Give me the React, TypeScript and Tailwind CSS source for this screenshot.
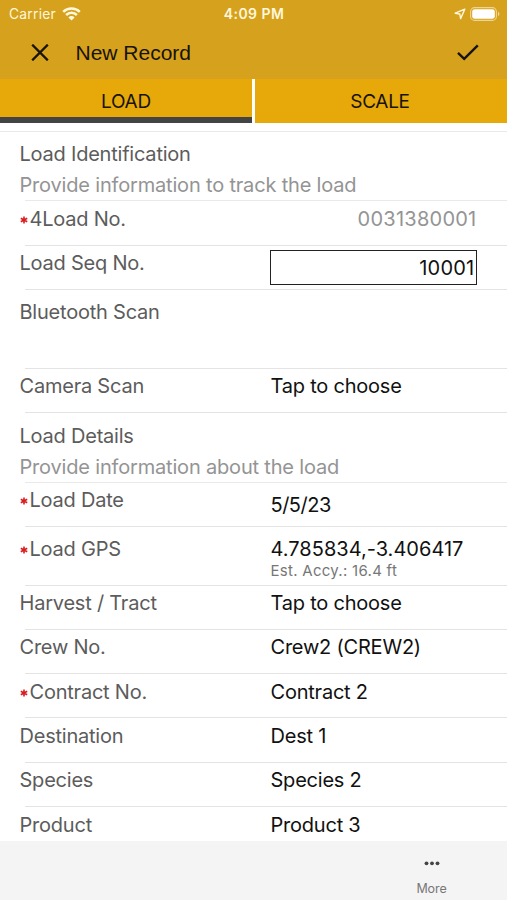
import React from 'react';
import { clsx } from 'clsx';

type Field = {
  label: string;
  value?: string;
  note?: string;
  required?: boolean;
  kind?: 'readonly' | 'input';
  height: string;
  labelPad?: string;
  valuePad?: string;
  valueTracking?: string;
};

const identificationFields: Field[] = [
  { label: '4Load No.', value: '0031380001', required: true, kind: 'readonly', height: 'h-[45px]', labelPad: 'pt-1' },
  { label: 'Load Seq No.', value: '10001', kind: 'input', height: 'h-11' },
  { label: 'Bluetooth Scan', height: 'h-[79px]', labelPad: 'pt-2' },
  { label: 'Camera Scan', value: 'Tap to choose', height: 'h-11' },
];

const detailFields: Field[] = [
  { label: 'Load Date', value: '5/5/23', required: true, height: 'h-11', valuePad: 'pt-2', valueTracking: 'tracking-[-0.5px]' },
  { label: 'Load GPS', value: '4.785834,-3.406417', note: 'Est. Accy.: 16.4 ft', required: true, height: 'h-[59px]', labelPad: 'pt-2', valuePad: 'pt-2', valueTracking: 'tracking-[0.02px]' },
  { label: 'Harvest / Tract', value: 'Tap to choose', height: 'h-11' },
  { label: 'Crew No.', value: 'Crew2 (CREW2)', height: 'h-11' },
  { label: 'Contract No.', value: 'Contract 2', required: true, height: 'h-11', labelPad: 'pt-1', valuePad: 'pt-1' },
  { label: 'Destination', value: 'Dest 1', height: 'h-[45px]', labelPad: 'pt-1', valuePad: 'pt-1' },
  { label: 'Species', value: 'Species 2', height: 'h-11' },
  { label: 'Product', value: 'Product 3', height: 'h-11', labelPad: 'pt-1', valuePad: 'pt-1' },
];

const StatusBar = () => (
  <div className="grid h-7 grid-cols-3 items-center pl-[9px] pr-[7px] text-[#fff8dc]">
    <div className="flex items-center gap-1.5">
      <span className="pt-px text-[13.8px] leading-none tracking-[0.25px]">Carrier</span>
      <svg width="19" height="14" viewBox="0 0 19 14" fill="none" stroke="currentColor" strokeWidth="2.5">
        <path d="M1.2 4.8a12 12 0 0 1 16.6 0" />
        <path d="M4.1 8a7.8 7.8 0 0 1 10.8 0" />
        <path d="M9.5 13.4 6.4 10.4a4.4 4.4 0 0 1 6.2 0z" fill="currentColor" stroke="none" />
      </svg>
    </div>
    <span className="-ml-px text-center text-[14px] font-semibold leading-none tracking-[0.45px]">4:09 PM</span>
    <div className="flex items-center justify-end gap-1">
      <svg width="12" height="12" viewBox="0 0 12 12" fill="none" stroke="currentColor" strokeWidth="1.4" strokeLinejoin="round">
        <path d="M10.8 1.2 1.2 5.2l4.6.8.8 4.6z" />
      </svg>
      <svg width="30" height="14" viewBox="0 0 30 14">
        <rect x="0.6" y="0.6" width="25.8" height="12.8" rx="4" fill="none" stroke="#efd593" strokeWidth="1.1" />
        <rect x="2.2" y="2.2" width="22.6" height="9.6" rx="2.4" fill="#fff" />
        <path d="M28 4.8v4.4a2.4 2.4 0 0 0 0-4.4z" fill="#efd593" />
      </svg>
    </div>
  </div>
);

const Header = () => (
  <div className="flex h-[51px] items-center pb-[3px] pl-[31px] pr-7 text-[#17130a]">
    <svg width="18" height="17" viewBox="0 0 18 17" fill="none" stroke="currentColor" strokeWidth="2.3">
      <path d="M1.2.7l15.6 15.6M16.8.7 1.2 16.3" />
    </svg>
    <h1 className="ml-[26.5px] flex-1 pt-px font-['Liberation_Sans',sans-serif] text-[21px] leading-none">New Record</h1>
    <svg width="22" height="17" viewBox="0 0 22 17" fill="none" stroke="currentColor" strokeWidth="2.4">
      <path d="M1 8.8l6.2 6L20.8 1.4" />
    </svg>
  </div>
);

const Tabs = () => (
  <div className="flex h-11 gap-[3px] text-[19px] leading-none text-[#17130a]">
    <button className="w-[252px] border-b-[6px] border-[#444444] bg-[#e6a909] pt-1.5 tracking-[-0.2px]">LOAD</button>
    <button className="flex-1 bg-[#e6a909] pr-0.5 tracking-[-0.3px]">SCALE</button>
  </div>
);

const SectionTitle = ({ title, subtitle }: { title: string; subtitle: string }) => (
  <div className="flex h-[70px] flex-col justify-between">
    <div className="pl-[19.5px] pt-[9px] text-xl leading-7 text-[#5c5c5c]">
      <h2 className="tracking-[-0.22px]">{title}</h2>
      <p className="mt-[3px] tracking-[-0.18px] text-[#949494]">{subtitle}</p>
    </div>
    <div className="ml-[25px] h-px bg-[#e9e9e9]" />
  </div>
);

const FieldRow = ({ field }: { field: Field }) => (
  <div className={clsx('flex shrink-0 flex-col', field.height)}>
    <div className="flex min-h-0 flex-1 pl-[19.5px] pr-[30.5px] text-xl leading-7">
      <div className={clsx('flex w-[251px] tracking-[-0.22px] text-[#5c5c5c]', field.labelPad ?? 'pt-[3px]')}>
        {field.required && (
          <svg className="mr-[2px] mt-[11px]" width="8" height="8" viewBox="0 0 8 8" stroke="#d81e1e" strokeWidth="1.6">
            <path d="M4 .4v7.2M.8 2.2l6.4 3.6M7.2 2.2.8 5.8" />
          </svg>
        )}
        <span>{field.label}</span>
      </div>
      {field.kind === 'input' && (
        <div className="-ml-px mt-1 flex h-[35px] flex-1 items-center justify-end border-[1.5px] border-[#222] pr-px tracking-[0.25px] text-[#111]">
          {field.value}
        </div>
      )}
      {field.kind === 'readonly' && (
        <div className="flex-1 pt-1 text-right tracking-[0.25px] text-[#949494]">{field.value}</div>
      )}
      {!field.kind && field.value && (
        <div className={clsx('flex-1 text-[#111]', field.valuePad ?? 'pt-[3px]')}>
          <p className={field.valueTracking ?? 'tracking-[-0.22px]'}>{field.value}</p>
          {field.note && <p className="text-[15px] leading-4 tracking-[0.28px] text-[#777]">{field.note}</p>}
        </div>
      )}
    </div>
    <div className="ml-[25px] h-px shrink-0 bg-[#e3e3e3]" />
  </div>
);

const BottomBar = () => (
  <div className="flex h-[59px] shrink-0 justify-end bg-[#f4f4f4] pr-[60px]">
    <button className="flex w-[31px] flex-col items-center pt-[19px] text-[12.5px] leading-none text-[#777]">
      <svg width="16" height="6" viewBox="0 0 16 6" fill="#444">
        <circle cx="2.5" cy="3.3" r="1.9" />
        <circle cx="8" cy="3.3" r="1.9" />
        <circle cx="13.5" cy="3.3" r="1.9" />
      </svg>
      <span className="mt-[17px] tracking-[-0.1px]">More</span>
    </button>
  </div>
);

const App = () => {
  return (
    <div className="flex h-[900px] w-[507px] flex-col overflow-hidden bg-white font-['Inter',sans-serif]">
      <header className="shrink-0">
        <div className="bg-[#d6a11c]">
          <StatusBar />
          <Header />
        </div>
        <Tabs />
      </header>

      <main className="min-h-0 flex-1 overflow-hidden pt-2">
        <div className="h-px bg-[#e9e9e9]" />
        <div className="-mt-px">
          <SectionTitle title="Load Identification" subtitle="Provide information to track the load" />
          {identificationFields.map((field) => (
            <FieldRow key={field.label} field={field} />
          ))}
          <SectionTitle title="Load Details" subtitle="Provide information about the load" />
          {detailFields.map((field) => (
            <FieldRow key={field.label} field={field} />
          ))}
        </div>
      </main>

      <BottomBar />
    </div>
  );
};

export default App;
